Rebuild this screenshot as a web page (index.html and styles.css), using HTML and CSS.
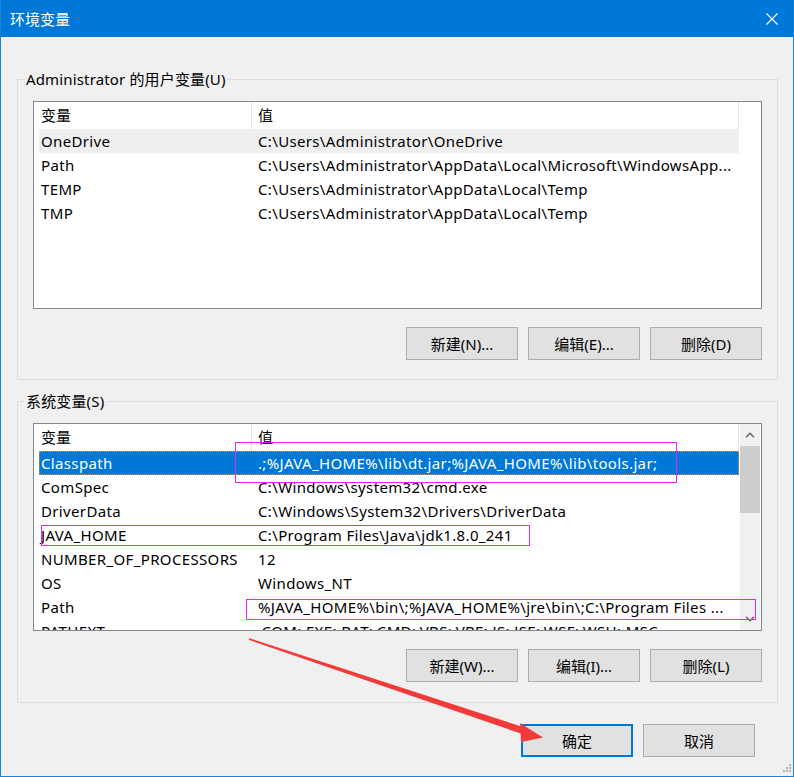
FILE: index.html
```html
<!DOCTYPE html>
<html lang="zh-CN">
<head>
<meta charset="utf-8">
<title>环境变量</title>
<link rel="stylesheet" href="styles.css">
</head>
<body>
<div class="window">
  <div class="titlebar">
    <span class="title">环境变量</span>
    <svg class="close" width="12" height="12" viewBox="0 0 12 12"><path d="M0.5 0.5 L11.5 11.5 M11.5 0.5 L0.5 11.5" stroke="#fff" stroke-width="1.2" fill="none"/></svg>
  </div>
  <div class="content">
    <section class="group">
      <div class="legend">Administrator 的用户变量(U)</div>
      <div class="listview">
        <div class="lv-rows">
          <div class="lv-header"><span class="h1">变量</span><span class="h2">值</span></div>
          <div class="row hover"><span class="c1">OneDrive</span><span class="c2">C:\Users\Administrator\OneDrive</span></div>
          <div class="row"><span class="c1">Path</span><span class="c2">C:\Users\Administrator\AppData\Local\Microsoft\WindowsApp...</span></div>
          <div class="row"><span class="c1">TEMP</span><span class="c2">C:\Users\Administrator\AppData\Local\Temp</span></div>
          <div class="row"><span class="c1">TMP</span><span class="c2">C:\Users\Administrator\AppData\Local\Temp</span></div>
        </div>
      </div>
      <div class="btns">
        <button>新建(N)...</button>
        <button>编辑(E)...</button>
        <button>删除(D)</button>
      </div>
    </section>
    <section class="group second">
      <div class="legend">系统变量(S)</div>
      <div class="listview">
        <div class="lv-rows">
          <div class="lv-header"><span class="h1">变量</span><span class="h2">值</span></div>
          <div class="row selected"><span class="c1">Classpath</span><span class="c2">.;%JAVA_HOME%\lib\dt.jar;%JAVA_HOME%\lib\tools.jar;</span></div>
          <div class="row"><span class="c1">ComSpec</span><span class="c2">C:\Windows\system32\cmd.exe</span></div>
          <div class="row"><span class="c1">DriverData</span><span class="c2">C:\Windows\System32\Drivers\DriverData</span></div>
          <div class="row"><span class="c1">JAVA_HOME</span><span class="c2">C:\Program Files\Java\jdk1.8.0_241</span></div>
          <div class="row"><span class="c1">NUMBER_OF_PROCESSORS</span><span class="c2">12</span></div>
          <div class="row"><span class="c1">OS</span><span class="c2">Windows_NT</span></div>
          <div class="row"><span class="c1">Path</span><span class="c2">%JAVA_HOME%\bin\;%JAVA_HOME%\jre\bin\;C:\Program Files ...</span></div>
          <div class="row"><span class="c1">PATHEXT</span><span class="c2">.COM;.EXE;.BAT;.CMD;.VBS;.VBE;.JS;.JSE;.WSF;.WSH;.MSC</span></div>
        </div>
        <div class="scrollbar">
          <div class="sb-btn"><svg width="10" height="6" viewBox="0 0 10 6"><path d="M1 5.2 L5 1.2 L9 5.2" stroke="#606060" stroke-width="1.4" fill="none"/></svg></div>
          <div class="sb-thumb"></div>
          <div class="sb-track"></div>
          <div class="sb-btn"><svg width="10" height="6" viewBox="0 0 10 6"><path d="M1 0.8 L5 4.8 L9 0.8" stroke="#606060" stroke-width="1.4" fill="none"/></svg></div>
        </div>
      </div>
      <div class="btns">
        <button>新建(W)...</button>
        <button>编辑(I)...</button>
        <button>删除(L)</button>
      </div>
    </section>
    <div class="footer">
      <button class="default">确定</button>
      <button>取消</button>
    </div>
  </div>

  <div class="annot a1"></div>
  <div class="annot a2"></div>
  <div class="annot a3"></div>

  <svg class="arrow" width="794" height="777" viewBox="0 0 794 777">
    <polygon points="248.7,639.8 249.3,638.2 526,728 523.8,734.6" fill="#f23a3a"/>
    <polygon points="543,737.5 520,723 521,742" fill="#f23a3a"/>
  </svg>

  <svg class="grip" width="12" height="12" viewBox="0 0 12 12">
    <rect x="9" y="1" width="2" height="2" fill="#b4b4b4"/>
    <rect x="6" y="4" width="2" height="2" fill="#b4b4b4"/>
    <rect x="9" y="4" width="2" height="2" fill="#b4b4b4"/>
    <rect x="3" y="7" width="2" height="2" fill="#b4b4b4"/>
    <rect x="6" y="7" width="2" height="2" fill="#b4b4b4"/>
    <rect x="9" y="7" width="2" height="2" fill="#b4b4b4"/>
  </svg>
</div>
</body>
</html>
```

FILE: styles.css
```css
* {
  box-sizing: border-box;
}

body {
  margin: 0;
  font-family: "Noto Sans", "Noto Sans CJK SC", sans-serif;
  font-size: 15px;
  color: #000;
  background: #fff;
}

.window {
  position: relative;
  width: 794px;
  height: 777px;
  background: #f0f0f0;
  border: 1px solid #1a82d8;
  border-top: none;
  overflow: hidden;
}

.titlebar {
  height: 37px;
  margin: 0 -1px;
  background: #0078d7;
  color: #fff;
  display: flex;
  align-items: center;
  padding-left: 10px;
}

.title {
  font-size: 15px;
  line-height: 20px;
  margin-top: 1px;
}

.close {
  margin-left: auto;
  margin-right: 16px;
  margin-top: 1px;
}

.content {
  padding: 0 15px 0 16px;
}

.group {
  border: 1px solid #dcdcdc;
  margin-top: 42px;
  padding: 0 15px 19px 15px;
}

.group.second {
  margin-top: 21px;
  padding-bottom: 20px;
}

.legend {
  width: fit-content;
  height: 20px;
  line-height: 20px;
  margin: -11px 0 -9px -9px;
  padding: 0 2px;
  background: #f0f0f0;
  white-space: nowrap;
  letter-spacing: 0.15px;
}

.listview {
  margin-top: 21px;
  height: 208px;
  border: 1px solid #828790;
  background: #fff;
  overflow: hidden;
  display: flex;
}

.lv-rows {
  margin-left: 5px;
  width: 700px;
  flex: none;
}

.lv-header {
  height: 27px;
  display: flex;
  line-height: 27px;
}

.lv-header .h1 {
  width: 213px;
  padding-left: 2px;
  border-right: 1px solid #e5e5e5;
}

.lv-header .h2 {
  flex: 1;
  padding-left: 6px;
  border-right: 1px solid #e5e5e5;
}

.row {
  height: 24px;
  line-height: 24px;
  display: flex;
  white-space: nowrap;
  letter-spacing: 0.35px;
}

.row .c1 {
  width: 219px;
  flex: none;
  padding-left: 2px;
  overflow: hidden;
}

.row .c2 {
  flex: 1;
  overflow: hidden;
}

.row.hover {
  background: #efefef;
}

.row.selected {
  background: #0078d7;
  color: #fff;
  outline: 1px dotted #ff8a2a;
  outline-offset: -1px;
}

.scrollbar {
  margin-left: 1px;
  width: 20px;
  flex: none;
  background: #f0f0f0;
  display: flex;
  flex-direction: column;
}

.sb-btn {
  height: 22px;
  display: flex;
  align-items: center;
  justify-content: center;
}

.sb-thumb {
  height: 67px;
  background: #cdcdcd;
}

.sb-track {
  flex: 1;
}

.btns {
  display: flex;
  justify-content: flex-end;
  gap: 10px;
  margin-top: 18px;
}

button {
  width: 112px;
  height: 33px;
  padding: 0;
  border: 1px solid #adadad;
  background: #e1e1e1;
  color: #000;
  font: inherit;
  line-height: 20px;
}

.footer {
  display: flex;
  justify-content: flex-end;
  gap: 10px;
  margin-top: 21px;
  padding-right: 23px;
}

button.default {
  border: 2px solid #0078d7;
}

.annot {
  position: absolute;
  border: 1px solid #f020f0;
}

.a1 {
  left: 234px;
  top: 442px;
  width: 442px;
  height: 41px;
}

.a2 {
  left: 40px;
  top: 525px;
  width: 489px;
  height: 21px;
}

.a3 {
  left: 245px;
  top: 599px;
  width: 510px;
  height: 21px;
}

.arrow {
  position: absolute;
  left: -1px;
  top: 0;
  pointer-events: none;
}

.grip {
  position: absolute;
  right: 1px;
  bottom: 1px;
}
```
